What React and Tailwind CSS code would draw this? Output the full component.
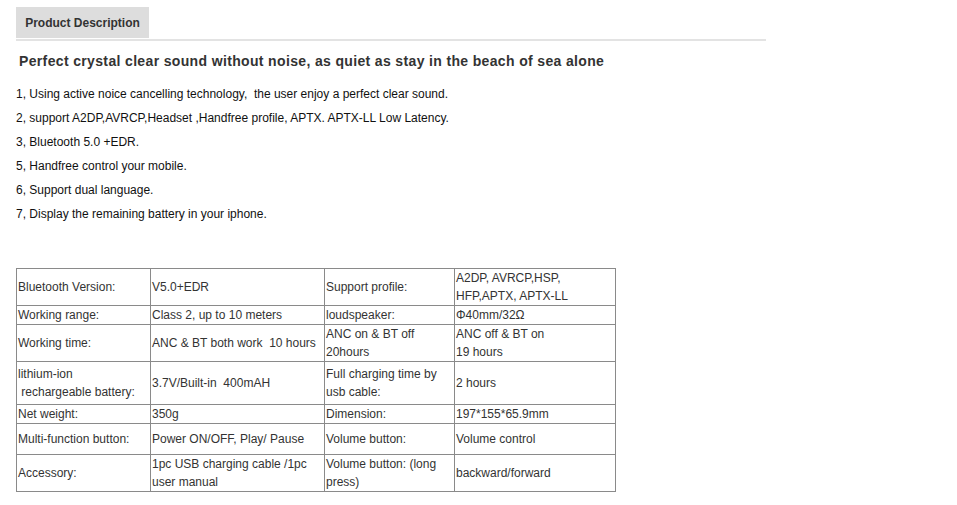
const features = [
  "1, Using active noice cancelling technology,  the user enjoy a perfect clear sound.",
  "2, support A2DP,AVRCP,Headset ,Handfree profile, APTX. APTX-LL Low Latency.",
  "3, Bluetooth 5.0 +EDR.",
  "5, Handfree control your mobile.",
  "6, Support dual language.",
  "7, Display the remaining battery in your iphone.",
];

const rows = [
  { h: "h-[36px]", cells: ["Bluetooth Version:", "V5.0+EDR", "Support profile:", "A2DP, AVRCP,HSP,\nHFP,APTX, APTX-LL"] },
  { h: "h-[17px]", cells: ["Working range:", "Class 2, up to 10 meters", "loudspeaker:", "Φ40mm/32Ω"] },
  { h: "h-[37px]", cells: ["Working time:", "ANC & BT both work  10 hours", "ANC on & BT off\n20hours", "ANC off & BT on\n19 hours"] },
  { h: "h-[43px]", cells: ["lithium-ion\n rechargeable battery:", "3.7V/Built-in  400mAH", "Full charging time by\nusb cable:", "2 hours"] },
  { h: "h-[19px]", cells: ["Net weight:", "350g", "Dimension:", "197*155*65.9mm"] },
  { h: "h-[31px]", cells: ["Multi-function button:", "Power ON/OFF, Play/ Pause", "Volume button:", "Volume control"] },
  { h: "h-[36px]", cells: ["Accessory:", "1pc USB charging cable /1pc\nuser manual", "Volume button: (long\npress)", "backward/forward"] },
];

export default function App() {
  return (
    <div className="w-[957px] h-[505px] bg-white font-['Liberation_Sans',Arial,sans-serif] overflow-hidden">
      <div className="pl-4 pt-[7px]">
        {/* tab */}
        <div className="w-[750px] border-b-2 border-[#e3e3e3] pb-[1px]">
          <div className="w-[133px] h-[31px] bg-[#dddddd] flex items-center justify-center text-[12px] font-bold text-[#333]">
            Product Description
          </div>
        </div>

        <h2 className="mt-[11px] pl-[3px] text-[14px] leading-[18px] font-bold tracking-[0.35px] text-[#333]">
          Perfect crystal clear sound without noise, as quiet as stay in the beach of sea alone
        </h2>

        <div className="mt-[12px] text-[12px] leading-[24px] text-[#111]">
          {features.map((f) => (
            <p key={f} className="whitespace-pre">{f}</p>
          ))}
        </div>

        <table className="mt-[42px] border-collapse border border-[#2b2b2b] text-[12px] leading-[18px] text-[#333]">
          <colgroup>
            <col className="w-[134px]" />
            <col className="w-[174px]" />
            <col className="w-[130px]" />
            <col className="w-[161px]" />
          </colgroup>
          <tbody>
            {rows.map((r) => (
              <tr key={r.cells[0]} className={r.h}>
                {r.cells.map((c, i) => (
                  <td key={i} className="border border-[#8a8a8a] px-[1px] py-0 align-middle whitespace-pre">
                    {c}
                  </td>
                ))}
              </tr>
            ))}
          </tbody>
        </table>
      </div>
    </div>
  );
}
